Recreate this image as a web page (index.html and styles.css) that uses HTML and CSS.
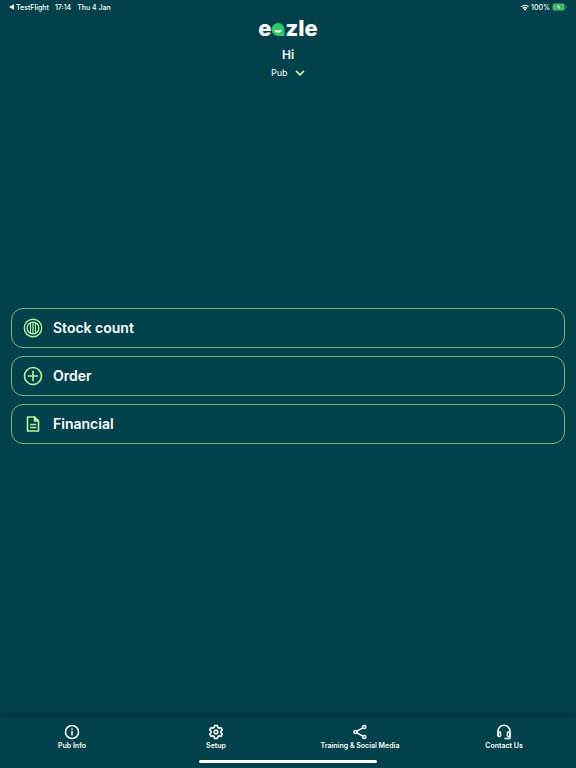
FILE: index.html
```html
<!DOCTYPE html>
<html lang="en">
<head>
  <meta charset="UTF-8" />
  <meta name="viewport" content="width=device-width, initial-scale=1.0" />
  <title>eazle</title>
  <link rel="stylesheet" href="styles.css">
</head>
<body>
  <div class="status-bar">
    <div class="status-group">
      <button type="button" class="back-app">
        <svg width="5" height="6" viewBox="0 0 5 6" aria-hidden="true"><path d="M5 .3v5.400L0 3z" fill="currentColor"/></svg>
        TestFlight
      </button>
      <span>17:14</span>
      <span>Thu 4 Jan</span>
    </div>
    <div class="status-right">
      <svg width="8" height="7" viewBox="0 0 16 13" fill="none" stroke="currentColor" stroke-width="2.600" aria-hidden="true">
        <path d="M1 5a10 10 0 0 1 14 0M4 8.300a6 6 0 0 1 8 0"/>
        <path d="M8 13L5.500 10.300a3.600 3.600 0 0 1 5 0z" fill="currentColor" stroke="none"/>
      </svg>
      <span>100%</span>
      <svg width="15" height="8" viewBox="0 0 15 8" aria-hidden="true">
        <rect x=".5" y=".5" width="12.500" height="7" rx="2.200" fill="none" stroke="#6d9190" stroke-width=".6"/>
        <rect x="1" y="1" width="11.500" height="6" rx="1.600" fill="#35c759"/>
        <path d="M14 3v2q.8-.3.8-1T14 3z" fill="#6d9190"/>
        <path d="M8 .3L4 4.500h2.400L5.500 7.700l4-4.200H7.100z" fill="#fff" stroke="#00414b" stroke-width=".4"/>
      </svg>
    </div>
  </div>

  <header class="header">
    <div class="logo">
      <span>e</span>
      <svg width="14" height="13" viewBox="0 0 14 13" role="img" aria-label="a">
        <path d="M7 0a6.500 6.500 0 0 1 6.500 6.500V13H7A6.500 6.500 0 0 1 7 0z" fill="#30c86a"/>
        <path d="M3.200 6.800q3.800 1.400 7.600 0a3.900 3.900 0 0 1-7.600 0z" fill="#fff"/>
      </svg>
      <span>zle</span>
    </div>
    <h1>Hi</h1>
    <div class="picker">
      <select aria-label="Location">
        <option>Pub</option>
      </select>
      <svg class="picker-arrow" width="10" height="6" viewBox="0 0 10 6" fill="none" stroke="currentColor" stroke-width="1.700" aria-hidden="true"><path d="M1 .8l4 4 4-4"/></svg>
    </div>
  </header>

  <main class="menu">
    <button type="button" class="menu-item">
      <svg width="20" height="20" viewBox="0 0 20 20" fill="none" stroke="currentColor" aria-hidden="true">
        <circle cx="10" cy="10" r="8.700" stroke-width="1.400"/>
        <circle cx="10" cy="10" r="5.900" stroke-width="1.300"/>
        <path d="M7.500 5v10M10 4v12M12.500 5v10" stroke-width="1.200"/>
      </svg>
      Stock count
    </button>
    <button type="button" class="menu-item">
      <svg width="20" height="20" viewBox="0 0 20 20" fill="none" stroke="currentColor" stroke-width="1.600" aria-hidden="true">
        <circle cx="10" cy="10" r="8.500"/>
        <path d="M10 4.800v10.400M4.800 10h10.400"/>
      </svg>
      Order
    </button>
    <button type="button" class="menu-item">
      <svg width="20" height="20" viewBox="0 0 20 20" fill="none" stroke="currentColor" stroke-width="1.600" stroke-linejoin="round" aria-hidden="true">
        <path d="M11.500 3H4.500v14h11V7z"/>
        <path d="M11.500 3v4h4z" fill="currentColor"/>
        <path d="M7.200 10.500h6M7.200 13.500h6" stroke-width="1.400"/>
      </svg>
      Financial
    </button>
  </main>

  <nav class="tab-bar">
    <a href="#info" class="tab">
      <svg width="16" height="16" viewBox="0 0 16 16" fill="none" stroke="currentColor" stroke-width="1.500" aria-hidden="true">
        <circle cx="8" cy="8" r="6.500"/>
        <path d="M8 7v4.500M8 4.400v1.600"/>
      </svg>
      Pub Info
    </a>
    <a href="#setup" class="tab">
      <svg width="16" height="16" viewBox="0 0 16 16" fill="none" stroke="currentColor" stroke-width="1.500" stroke-linejoin="round" aria-hidden="true">
        <path d="M6.600 1.500h2.800l.4 2 1.200.7 1.900-.7 1.400 2.400-1.500 1.400v1.400l1.500 1.400-1.400 2.400-1.900-.7-1.200.7-.4 2H6.600l-.4-2-1.200-.7-1.900.7-1.400-2.400 1.500-1.400V7.300L1.700 5.900l1.400-2.400 1.900.7 1.200-.7z"/>
        <circle cx="8" cy="8" r="1.800"/>
      </svg>
      Setup
    </a>
    <a href="#training" class="tab">
      <svg width="16" height="16" viewBox="0 0 16 16" fill="none" stroke="currentColor" stroke-width="1.500" aria-hidden="true">
        <circle cx="3.500" cy="8" r="1.600"/>
        <circle cx="12.200" cy="3" r="1.600"/>
        <circle cx="12.200" cy="13" r="1.600"/>
        <path d="M4.900 7.200l5.900-3.400M4.900 8.800l5.900 3.400"/>
      </svg>
      Training &amp; Social Media
    </a>
    <a href="#contact" class="tab">
      <svg width="16" height="16" viewBox="0 0 16 16" fill="none" stroke="currentColor" stroke-width="1.500" stroke-linejoin="round" aria-hidden="true">
        <path d="M2 12V7.300a6 6 0 0 1 12 0v7.300H8.500"/>
        <rect x="2" y="8" width="2.600" height="4.600" rx="1"/>
        <rect x="11.400" y="8" width="2.600" height="4.600" rx="1"/>
      </svg>
      Contact Us
    </a>
  </nav>
  <div class="home-indicator"></div>
</body>
</html>
```

FILE: styles.css
```css
* {
  box-sizing: border-box;
}
body {
  display: flex;
  flex-direction: column;
  min-height: 100vh;
  margin: 0;
  background-color: #00414b;
  color: #fff;
  font-family: Inter, "Liberation Sans", sans-serif;
}
button,
select {
  border: none;
  background: none;
  color: inherit;
  font: inherit;
  cursor: pointer;
}
svg {
  flex-shrink: 0;
}

/* Device status bar */
.status-bar {
  display: flex;
  justify-content: space-between;
  align-items: center;
  height: 14px;
  padding: 0 9px;
  font-size: 7px;
  font-weight: 500;
}
.status-group {
  display: flex;
  gap: 6px;
}
.status-right {
  display: flex;
  align-items: center;
  gap: 2px;
}
.back-app {
  display: flex;
  align-items: center;
  gap: 2px;
  padding: 0;
}

/* Header */
.header {
  display: flex;
  flex-direction: column;
  align-items: center;
}
.logo {
  display: flex;
  align-items: baseline;
  height: 30px;
  font-size: 22px;
  font-weight: 800;
  line-height: 28px;
}
h1 {
  margin: 3px 0 0;
  font-size: 12px;
  font-weight: 600;
  line-height: 16px;
}
.picker {
  position: relative;
  margin-top: 2px;
}
.picker select {
  display: block;
  appearance: none;
  padding: 0 17px 0 0;
  font-size: 9px;
  line-height: 16px;
}
.picker-arrow {
  position: absolute;
  top: 5px;
  right: 0;
  color: #c3f5ad;
  pointer-events: none;
}

/* Main actions */
.menu {
  display: flex;
  flex: 1;
  flex-direction: column;
  justify-content: center;
  gap: 8px;
  padding: 0 11px 46px;
}
.menu-item {
  display: flex;
  align-items: center;
  gap: 10px;
  height: 40px;
  padding: 0 11px 1px;
  border: 1px solid #79b486;
  border-radius: 12px;
  font-size: 14px;
  font-weight: 600;
  text-align: left;
}
.menu-item svg {
  color: #b9f2a1;
}

/* Bottom navigation */
.tab-bar {
  display: flex;
  height: 43px;
  padding-top: 7px;
  box-shadow: 0 -1px 4px rgba(0, 0, 0, 0.3);
}
.tab {
  display: flex;
  flex: 1;
  flex-direction: column;
  align-items: center;
  color: #fff;
  font-size: 7px;
  font-weight: 600;
  line-height: 12px;
  text-decoration: none;
}
.home-indicator {
  width: 31%;
  height: 3px;
  margin: 0 auto 5px;
  border-radius: 2px;
  background-color: #fff;
}
```
